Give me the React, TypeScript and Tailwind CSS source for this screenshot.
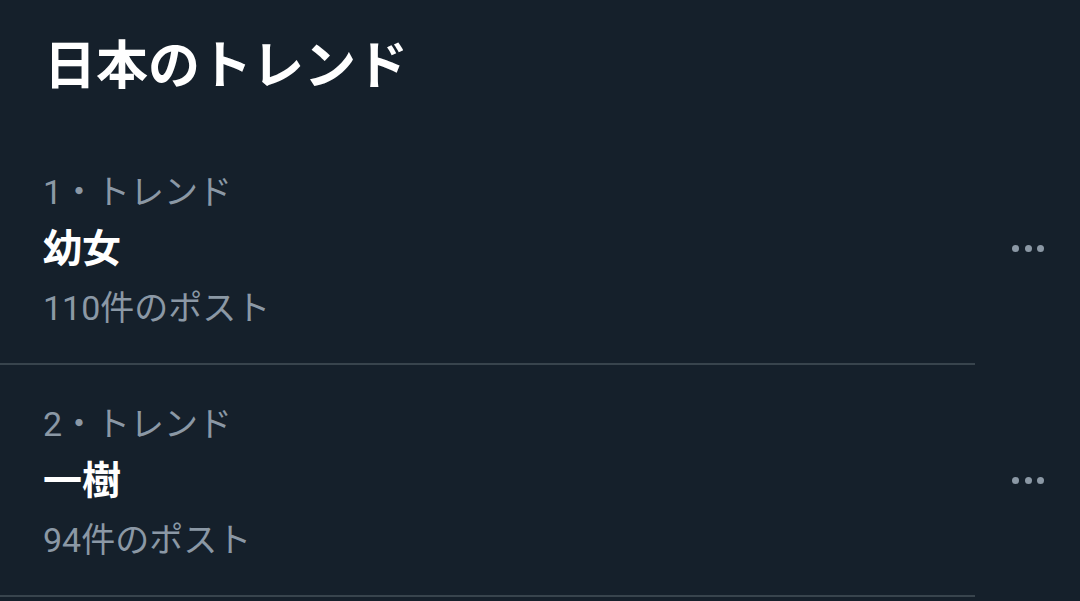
import React from "react";

interface Trend {
  rank: number;
  name: string;
  posts: string;
}

const trends: Trend[] = [
  { rank: 1, name: "幼女", posts: "110件のポスト" },
  { rank: 2, name: "一樹", posts: "94件のポスト" },
];

function MoreDots() {
  return (
    <div className="flex items-center gap-[5.5px]">
      <span className="block w-[7px] h-[7px] rounded-full bg-[#8b98a5]" />
      <span className="block w-[7px] h-[7px] rounded-full bg-[#8b98a5]" />
      <span className="block w-[7px] h-[7px] rounded-full bg-[#8b98a5]" />
    </div>
  );
}

function TrendRow({ trend }: { trend: Trend }) {
  return (
    <div>
      <div className="flex items-start pl-[43px] pr-[36px] pt-[36px] pb-[32px]">
        <div className="flex-1">
          <p className="text-[34px] leading-[46px] text-[#8b98a5]">{trend.rank}・トレンド</p>
          <p className="mt-[8px] text-[39px] leading-[52px] font-bold text-white">{trend.name}</p>
          <p className="mt-[10px] text-[34px] leading-[46px] text-[#8b98a5]">{trend.posts}</p>
        </div>
        <div className="mt-[76px]">
          <MoreDots />
        </div>
      </div>
      <div className="h-[2px] w-[975px] bg-[#38444d]" />
    </div>
  );
}

export default function App() {
  return (
    <div
      className="w-[1080px] h-[601px] overflow-hidden bg-[#15202b]"
      style={{ fontFamily: "Roboto, 'Noto Sans CJK JP', sans-serif" }}
    >
      <div className="h-[133px] pl-[44px] pt-[33px]">
        <h1 className="text-[52px] leading-[68px] font-bold text-white">日本のトレンド</h1>
      </div>
      {trends.map((t) => (
        <TrendRow key={t.rank} trend={t} />
      ))}
    </div>
  );
}
